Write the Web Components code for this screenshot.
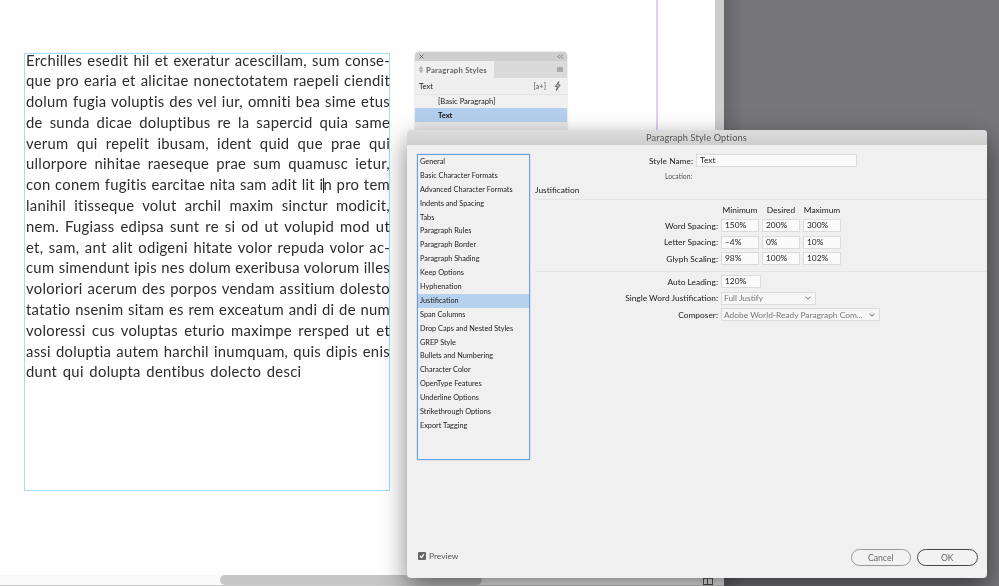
<!DOCTYPE html>
<html><head><meta charset="utf-8"><style>
html,body{margin:0;padding:0;width:999px;height:586px;overflow:hidden;background:#fff}
</style></head><body>
<id-app></id-app>
<template id="t-app"><style>
:host{display:grid;grid-template-columns:715px 9px 1fr;grid-template-rows:575px 11px;width:999px;height:586px;position:relative;overflow:hidden;font-family:"Lato",sans-serif;filter:blur(.3px)}
.canvas{background:#fff;padding:53px 0 0 24px;position:relative;box-sizing:border-box}
.guide{position:absolute;left:656px;top:0;width:2px;height:130px;background:#e4cdf8}
.strip{background:#cdcdcd}
.dark{grid-row:1/3;grid-column:3;background:linear-gradient(90deg,#66666a,#77777b 20px)}
.bar{grid-column:1/3;grid-row:2;background:#f9f9f9;border-bottom:1px solid #ccc;box-sizing:border-box;position:relative;display:flex;align-items:center}
.thumb{margin-left:220px;width:262px;height:10px;background:#c6c6c6;border-radius:5px}
.page-icon{position:absolute;left:703px;top:3px;width:10px;height:7px;border:1px solid #555;border-top:1px solid #777;box-sizing:border-box}
.page-icon::after{content:"";position:absolute;left:3px;top:0;bottom:0;width:1px;background:#555}
id-panel{position:absolute;left:415px;top:52px}
id-dialog{position:absolute;left:407px;top:130px}
</style>
<div class="canvas"><id-frame></id-frame><div class="guide"></div></div>
<div class="strip"></div><div class="dark"></div>
<div class="bar"><div class="thumb"></div><div class="page-icon"></div></div>
<id-panel></id-panel><id-dialog></id-dialog>
</template>

<template id="t-frame"><style>
:host{display:block;width:366px;height:438px;box-sizing:border-box;border:1px solid #a6dcf5;padding:0 0 0 1px;position:relative;font-family:"Lato","Open Sans",sans-serif;font-size:14.8px;letter-spacing:.3px;color:#2c2c2c}
.lines{margin-top:-4.5px}
.l{display:block;height:20.8px;line-height:20.8px;text-align:justify;text-align-last:justify;white-space:normal;width:364px}
.l.e{text-align-last:left;word-spacing:1.5px}
.caret{display:inline-block;width:0;height:15px;border-left:1px solid #222;margin:0 -1px 0 0;vertical-align:-3px}
</style>
<div class="lines">
<span class="l">Erchilles esedit hil et exeratur acescillam, sum conse-</span>
<span class="l">que pro earia et alicitae nonectotatem raepeli ciendit</span>
<span class="l">dolum fugia voluptis des vel iur, omniti bea sime etus</span>
<span class="l">de sunda dicae doluptibus re la sapercid quia same</span>
<span class="l">verum qui repelit ibusam, ident quid que prae qui</span>
<span class="l">ullorpore nihitae raeseque prae sum quamusc ietur,</span>
<span class="l">con conem fugitis earcitae nita sam adit lit i<i class="caret"></i>n pro tem</span>
<span class="l">lanihil itisseque volut archil maxim sinctur modicit,</span>
<span class="l">nem. Fugiass edipsa sunt re si od ut volupid mod ut</span>
<span class="l">et, sam, ant alit odigeni hitate volor repuda volor ac-</span>
<span class="l">cum simendunt ipis nes dolum exeribusa volorum illes</span>
<span class="l">voloriori acerum des porpos vendam assitium dolesto</span>
<span class="l">tatatio nsenim sitam es rem exceatum andi di de num</span>
<span class="l">voloressi cus voluptas eturio maximpe rersped ut et</span>
<span class="l">assi doluptia autem harchil inumquam, quis dipis enis</span>
<span class="l e">dunt qui dolupta dentibus dolecto desci</span>
</div>
</template>

<template id="t-panel"><style>
:host{display:block;width:152px;height:90px;background:#efefef;border-radius:4px 4px 0 0;box-shadow:0 0 2px rgba(0,0,0,.25);font-family:"Lato",sans-serif;font-size:7.6px;color:#222;overflow:hidden}
.top{height:9px;background:#cfcfcf;display:flex;justify-content:space-between;align-items:center;padding:0 3px 0 4px}
.tabs{height:17px;background:#dadada;display:flex;align-items:stretch;justify-content:space-between}
.tab{width:79px;background:#efefef;display:flex;align-items:center;gap:3px;padding-left:4px;box-sizing:border-box;font-size:7.8px;font-weight:700;color:#666;letter-spacing:.2px;white-space:nowrap}
.menu{width:6px;height:5px;background:#aaa;margin:6px 4px 0 0}
.hdr{height:15.5px;display:flex;align-items:center;justify-content:space-between;padding:0 6px 0 4px;box-sizing:border-box}
.icons{display:flex;gap:8px;align-items:center;color:#555}
.row{height:14px;line-height:13px;padding-left:23px;background:#f0f0f0;border-top:1px solid #e4e4e4;box-sizing:border-box}
.row.sel{background:#b5d0ee;border-top-color:#b5d0ee;font-weight:700;color:#111}
.rest{height:20px;background:#e9e9e9}
</style>
<div class="top"><svg width="5" height="5" viewBox="0 0 5 5"><path d="M.5 .5 4.5 4.5M4.5 .5 .5 4.5" stroke="#666" stroke-width=".8" fill="none"/></svg><svg width="7" height="5" viewBox="0 0 7 5"><path d="M3 .5 1 2.5 3 4.5M6 .5 4 2.5 6 4.5" stroke="#666" stroke-width=".8" fill="none"/></svg></div>
<div class="tabs"><div class="tab"><svg width="4" height="7" viewBox="0 0 4 7"><path d="M2 .5 3.5 2.8H.5zM2 6.5 3.5 4.2H.5z" fill="none" stroke="#777" stroke-width=".6"/></svg>Paragraph Styles</div><div class="menu"></div></div>
<div class="hdr"><span>Text</span><span class="icons"><span>[a+]</span><svg width="7" height="10" viewBox="0 0 8 11"><path d="M5.5 .5 1.5 6h2.6l-1.4 4.5L7 4.4H4.4z" fill="none" stroke="#444" stroke-width=".9"/></svg></span></div>
<div class="row">[Basic Paragraph]</div>
<div class="row sel">Text</div>
<div class="rest"></div>
</template>

<template id="t-dialog"><style>
:host{display:block;width:580px;height:448px;background:#f0f0f0;border-radius:4px;box-shadow:0 10px 26px rgba(0,0,0,.5);font-family:"Lato",sans-serif;font-size:8.4px;color:#222;overflow:hidden}
.title{height:15px;background:linear-gradient(#dcdcdc,#cecece);display:flex;align-items:center;justify-content:center;font-size:9.2px;color:#555;letter-spacing:.15px;padding-right:1px}
.body{display:grid;grid-template-columns:113px 1fr;column-gap:5px;padding:9px 0 0 10px;height:404px;box-sizing:border-box}
.list{height:306px;box-sizing:border-box;border:1px solid #6a9ee0;box-shadow:0 0 1px #6a9ee0;display:flex;flex-direction:column}
.list div{height:13.9px;line-height:13.9px;padding-left:2px;flex:none;white-space:nowrap;font-size:7.3px;color:#222}
.list .sel{background:#b7d2ef}
.main{display:flex;flex-direction:column}
.r{display:flex;align-items:center;gap:3px}
label{display:block;text-align:right;white-space:nowrap}
.f{box-sizing:border-box;height:13px;background:#fafafa;border:1px solid #dcdcdc;line-height:11px;padding-left:3px;white-space:nowrap}
.sn label{width:158px}
.sn .f{width:161px}
.loc{margin-top:5px;padding-left:130px;font-size:6.8px;color:#555;height:9px;line-height:9px}
.h{margin-top:3.5px;height:10px;line-height:10px}
hr{border:0;border-top:1px solid #e4e4e4;margin:4.5px 0 0;height:0;width:100%}
.cols{display:grid;grid-template-columns:38px 38px 38px;column-gap:3px;margin:4.5px 0 4.5px 186px;text-align:center;height:10px;line-height:10px}
.g{display:grid;grid-template-columns:183px 38px 38px 38px;column-gap:3px;row-gap:3.5px;align-items:center}
.g+hr{margin-top:6px}
.g2{display:grid;grid-template-columns:183px auto;column-gap:3px;row-gap:3.5px;align-items:center;margin-top:3px;justify-items:start}
.g2 label{justify-self:end}
.sel2{box-sizing:border-box;height:13px;background:#f6f6f6;border:1px solid #dcdcdc;color:#777;padding:0 2px;display:flex;justify-content:space-between;align-items:center;white-space:nowrap;overflow:hidden}
.sel2 svg{flex:none;margin-right:2px}
.foot{display:flex;justify-content:space-between;align-items:center;padding:0 9.5px 0 11px}
.pv{display:flex;align-items:center;gap:3px;color:#555;margin-top:-3px}
.cb{width:8px;height:8px;background:#666;border-radius:1px;display:flex;align-items:center;justify-content:center}
.btns{display:flex;gap:6px}
.b{box-sizing:border-box;width:60.5px;height:17px;border-radius:9px;border:1px solid #999;display:flex;align-items:center;justify-content:center;font-size:8.6px;color:#666;background:#f2f2f2}
.b.ok{border:1.5px solid #444}
</style>
<div class="title">Paragraph Style Options</div>
<div class="body">
<div class="list"><div>General</div><div>Basic Character Formats</div><div>Advanced Character Formats</div><div>Indents and Spacing</div><div>Tabs</div><div>Paragraph Rules</div><div>Paragraph Border</div><div>Paragraph Shading</div><div>Keep Options</div><div>Hyphenation</div><div class="sel">Justification</div><div>Span Columns</div><div>Drop Caps and Nested Styles</div><div>GREP Style</div><div>Bullets and Numbering</div><div>Character Color</div><div>OpenType Features</div><div>Underline Options</div><div>Strikethrough Options</div><div>Export Tagging</div></div>
<div class="main">
<div class="r sn"><label>Style Name:</label><div class="f">Text</div></div>
<div class="loc">Location:</div>
<div class="h">Justification</div><hr>
<div class="cols"><span>Minimum</span><span>Desired</span><span>Maximum</span></div>
<div class="g"><label>Word Spacing:</label><div class="f">150%</div><div class="f">200%</div><div class="f">300%</div>
<label>Letter Spacing:</label><div class="f">−4%</div><div class="f">0%</div><div class="f">10%</div>
<label>Glyph Scaling:</label><div class="f">98%</div><div class="f">100%</div><div class="f">102%</div></div>
<hr>
<div class="g2"><label>Auto Leading:</label><div class="f" style="width:40px">120%</div>
<label>Single Word Justification:</label><div class="sel2" style="width:95px">Full Justify<svg width="6" height="4" viewBox="0 0 6 4"><path d="M.5 .8 3 3.2 5.5 .8" fill="none" stroke="#666"/></svg></div>
<label>Composer:</label><div class="sel2" style="width:159px">Adobe World-Ready Paragraph Com...<svg width="6" height="4" viewBox="0 0 6 4"><path d="M.5 .8 3 3.2 5.5 .8" fill="none" stroke="#666"/></svg></div></div>
</div></div>
<div class="foot"><div class="pv"><span class="cb"><svg width="6" height="6" viewBox="0 0 6 6"><path d="M1 3 2.5 4.6 5 1.2" fill="none" stroke="#fff" stroke-width="1.2"/></svg></span>Preview</div>
<div class="btns"><div class="b">Cancel</div><div class="b ok">OK</div></div></div>
</template>
<script>
function reg(name,id){customElements.define(name,class extends HTMLElement{constructor(){super();this.attachShadow({mode:"open"}).appendChild(document.getElementById(id).content.cloneNode(true));}});}
reg("id-frame","t-frame");reg("id-panel","t-panel");reg("id-dialog","t-dialog");reg("id-app","t-app");
</script>
</body></html>
